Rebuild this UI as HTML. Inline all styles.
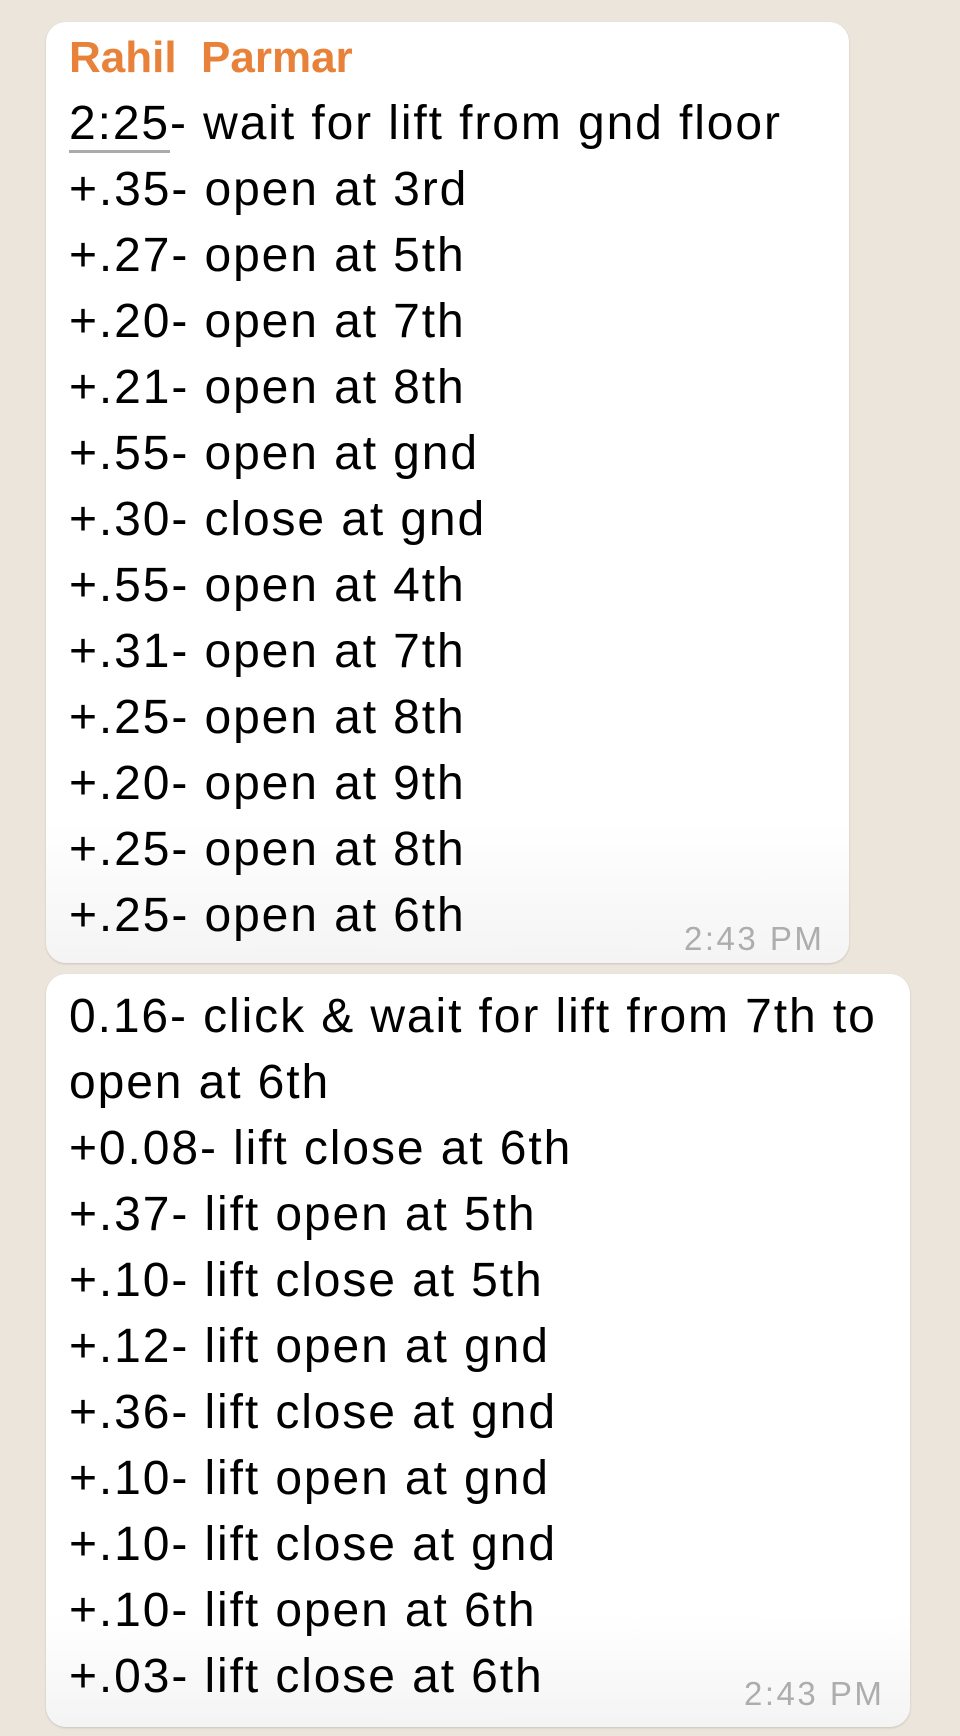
<!DOCTYPE html>
<html><head><meta charset="utf-8"><style>
html,body{margin:0;padding:0}
body{width:960px;height:1736px;background:#ebe5dc;position:relative;overflow:hidden;font-family:"Liberation Sans",sans-serif}
.b{position:absolute;left:46px;background:linear-gradient(#fff,#fff 85%,#f4f4f4);border-radius:20px;box-shadow:0 1px 2px rgba(0,0,0,0.15)}
.l{position:absolute;left:23px;font-size:48px;letter-spacing:1.9px;color:#000;white-space:nowrap;line-height:1}
.n{position:absolute;left:23px;font-size:44px;font-weight:bold;letter-spacing:0;color:#e8823a;line-height:1}
.t{position:absolute;font-size:33px;letter-spacing:2.5px;color:#adadad;line-height:1}
</style></head><body>
<div class="b" style="top:22px;width:803px;height:941px">
<div class="n" style="top:14px">Rahil&nbsp; Parmar</div>
<div class="l" style="top:78px"><span style="border-bottom:3px solid #aaa">2:25</span>- wait for lift from gnd floor</div>
<div class="l" style="top:144px">+.35- open at 3rd</div>
<div class="l" style="top:210px">+.27- open at 5th</div>
<div class="l" style="top:276px">+.20- open at 7th</div>
<div class="l" style="top:342px">+.21- open at 8th</div>
<div class="l" style="top:408px">+.55- open at gnd</div>
<div class="l" style="top:474px">+.30- close at gnd</div>
<div class="l" style="top:540px">+.55- open at 4th</div>
<div class="l" style="top:606px">+.31- open at 7th</div>
<div class="l" style="top:672px">+.25- open at 8th</div>
<div class="l" style="top:738px">+.20- open at 9th</div>
<div class="l" style="top:804px">+.25- open at 8th</div>
<div class="l" style="top:870px">+.25- open at 6th</div>
<div class="t" style="left:638px;top:900px">2:43 PM</div>
</div>
<div class="b" style="top:974px;width:864px;height:753px">
<div class="l" style="top:19px">0.16- click &amp; wait for lift from 7th to</div>
<div class="l" style="top:85px">open at 6th</div>
<div class="l" style="top:151px">+0.08- lift close at 6th</div>
<div class="l" style="top:217px">+.37- lift open at 5th</div>
<div class="l" style="top:283px">+.10- lift close at 5th</div>
<div class="l" style="top:349px">+.12- lift open at gnd</div>
<div class="l" style="top:415px">+.36- lift close at gnd</div>
<div class="l" style="top:481px">+.10- lift open at gnd</div>
<div class="l" style="top:547px">+.10- lift close at gnd</div>
<div class="l" style="top:613px">+.10- lift open at 6th</div>
<div class="l" style="top:679px">+.03- lift close at 6th</div>
<div class="t" style="left:698px;top:703px">2:43 PM</div>
</div>
</body></html>
